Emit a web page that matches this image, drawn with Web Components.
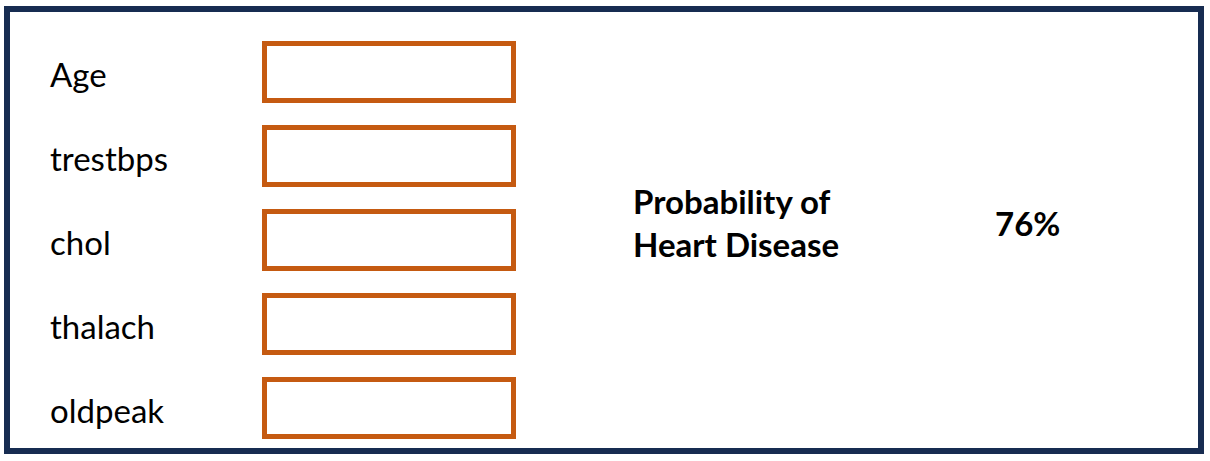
<!DOCTYPE html>
<html lang="en">
<head>
<meta charset="utf-8">
<meta name="viewport" content="width=device-width, initial-scale=1">
<title>Heart Disease Probability</title>
<style>
  body { margin: 0; background: #fff; color: #000; font: 33px/43px Lato, Carlito, sans-serif; }
</style>
</head>
<body>
<risk-panel>
  <risk-field name="age">Age</risk-field>
  <risk-field name="trestbps">trestbps</risk-field>
  <risk-field name="chol">chol</risk-field>
  <risk-field name="thalach">thalach</risk-field>
  <risk-field name="oldpeak">oldpeak</risk-field>
  <risk-result slot="result" value="76%">Probability of<br>Heart Disease</risk-result>
</risk-panel>

<template id="panel">
  <style>
    :host { display: block; padding: 6px 6px 7px 4px; }
    main { display: grid; grid-template-columns: 583fr 565fr; align-items: center;
           border: 6px solid #172c51; padding: 29px 0 9px 40px; }
    form { display: grid; gap: 22px; }
    ::slotted(risk-result) { margin-bottom: 34px; }
  </style>
  <main>
    <form><slot></slot></form>
    <slot name="result"></slot>
  </main>
</template>

<template id="field">
  <style>
    :host { display: block; }
    .row { display: grid; grid-template-columns: 212fr 371fr; align-items: center; }
    label { padding-top: 4px; }
    input { box-sizing: border-box; width: 254px; max-width: 100%; height: 62px; margin: 0; padding: 0 12px;
            border: 5px solid #c55a11; border-radius: 0; background: #fff; color: inherit; font: inherit; }
    input:focus { outline: 2px solid #172c51; }
  </style>
  <div class="row">
    <label for="value"><slot></slot></label>
    <input id="value" type="text" autocomplete="off">
  </div>
</template>

<template id="result">
  <style>
    :host { display: block; font-weight: 700; }
    .row { display: grid; grid-template-columns: 362fr 203fr; align-items: center; }
  </style>
  <div class="row">
    <div id="caption"><slot></slot></div>
    <output aria-labelledby="caption"></output>
  </div>
</template>

<script>
  const stamp = (host, id) => {
    const root = host.attachShadow({ mode: "open" });
    root.append(document.getElementById(id).content.cloneNode(true));
    return root;
  };

  customElements.define("risk-panel", class extends HTMLElement {
    constructor() {
      super();
      stamp(this, "panel").querySelector("form")
        .addEventListener("submit", (event) => event.preventDefault());
    }
  });

  customElements.define("risk-field", class extends HTMLElement {
    constructor() { super(); stamp(this, "field"); }
    connectedCallback() {
      const input = this.shadowRoot.querySelector("input");
      input.name = this.getAttribute("name");
      input.setAttribute("aria-label", this.textContent.trim());
    }
  });

  customElements.define("risk-result", class extends HTMLElement {
    static observedAttributes = ["value"];
    constructor() { super(); stamp(this, "result"); }
    attributeChangedCallback(name, previous, value) {
      this.shadowRoot.querySelector("output").textContent = value;
    }
  });
</script>
</body>
</html>
